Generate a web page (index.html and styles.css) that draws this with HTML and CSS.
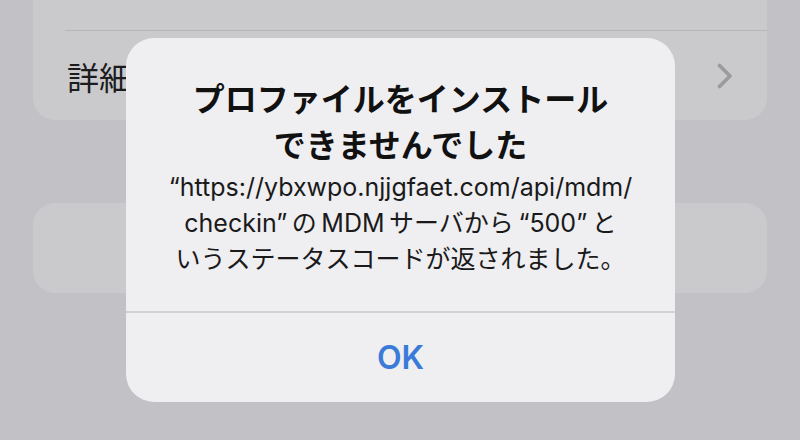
FILE: index.html
```html
<!DOCTYPE html>
<html lang="ja">
<head>
    <meta charset="UTF-8">
    <meta name="viewport" content="width=device-width, initial-scale=1.0">
    <title>プロファイル</title>
    <link rel="stylesheet" href="styles.css">
</head>
<body>

    <!-- Settings list behind the alert -->
    <main class="settings">
        <section class="group group-top">
            <div class="row row-blank"></div>
            <div class="row row-link">
                <span class="row-label">詳細</span>
                <svg class="chevron" width="16" height="26" viewBox="0 0 16 26">
                    <path d="M2.5 2.5 L13 13 L2.5 23.5" fill="none" stroke="#9b9b9f" stroke-width="3.6" stroke-linecap="round" stroke-linejoin="round"/>
                </svg>
            </div>
        </section>
        <section class="group group-second"></section>
    </main>

    <!-- Alert -->
    <div class="alert" role="alertdialog">
        <div class="alert-body">
            <h1 class="alert-title">プロファイルをインストール<br>できませんでした</h1>
            <p class="alert-message">“https://ybxwpo.njjgfaet.com/api/mdm/<br>checkin”&thinsp;の&thinsp;MDM&thinsp;サーバから&thinsp;“500”&thinsp;と<br>いうステータスコードが返されました。</p>
        </div>
        <button class="alert-btn">OK</button>
    </div>

</body>
</html>
```

FILE: styles.css
```css
/* Global */
html, body {
    height: 100%;
}

body {
    margin: 0;
    background-color: #c1c1c6;
    font-family: Inter, "Noto Sans CJK JP", sans-serif;
    overflow: hidden;
    position: relative;
}

/* Settings list */
.settings {
    padding: 0 33px;
}

.group {
    background-color: #cacacc;
    border-radius: 22px;
}

.group-top {
    margin-top: -40px;
}

.group-second {
    margin-top: 83px;
    height: 90px;
}

.row {
    margin-left: 32px;
    padding-right: 34px;
}

.row-blank {
    height: 70px;
    border-bottom: 1px solid #b6b6b9;
}

.row-link {
    height: 89px;
    display: flex;
    align-items: center;
    justify-content: space-between;
}

.row-label {
    font-family: "Noto Sans CJK JP", sans-serif;
    font-size: 32px;
    color: #1c1c1e;
    margin-left: 2px;
}

/* Alert */
.alert {
    position: absolute;
    left: 126px;
    top: 38px;
    width: 549px;
    height: 364px;
    background-color: #efeef1;
    border-radius: 28px;
    display: flex;
    flex-direction: column;
    overflow: hidden;
}

.alert-body {
    flex: 1;
    padding: 36px 20px 0;
    text-align: center;
    border-bottom: 2px solid #d2d2d6;
}

.alert-title {
    margin: 0;
    font-family: "Noto Sans CJK JP", sans-serif;
    font-size: 32px;
    font-weight: 700;
    line-height: 46px;
    color: #111;
}

.alert-message {
    margin: 3px 0 0;
    font-size: 25px;
    line-height: 36px;
    color: #1a1a1a;
}

.alert-btn {
    height: 89px;
    border: none;
    background: none;
    font-family: Inter, sans-serif;
    font-size: 32px;
    font-weight: 600;
    color: #3a7bd8;
    cursor: pointer;
}
```
